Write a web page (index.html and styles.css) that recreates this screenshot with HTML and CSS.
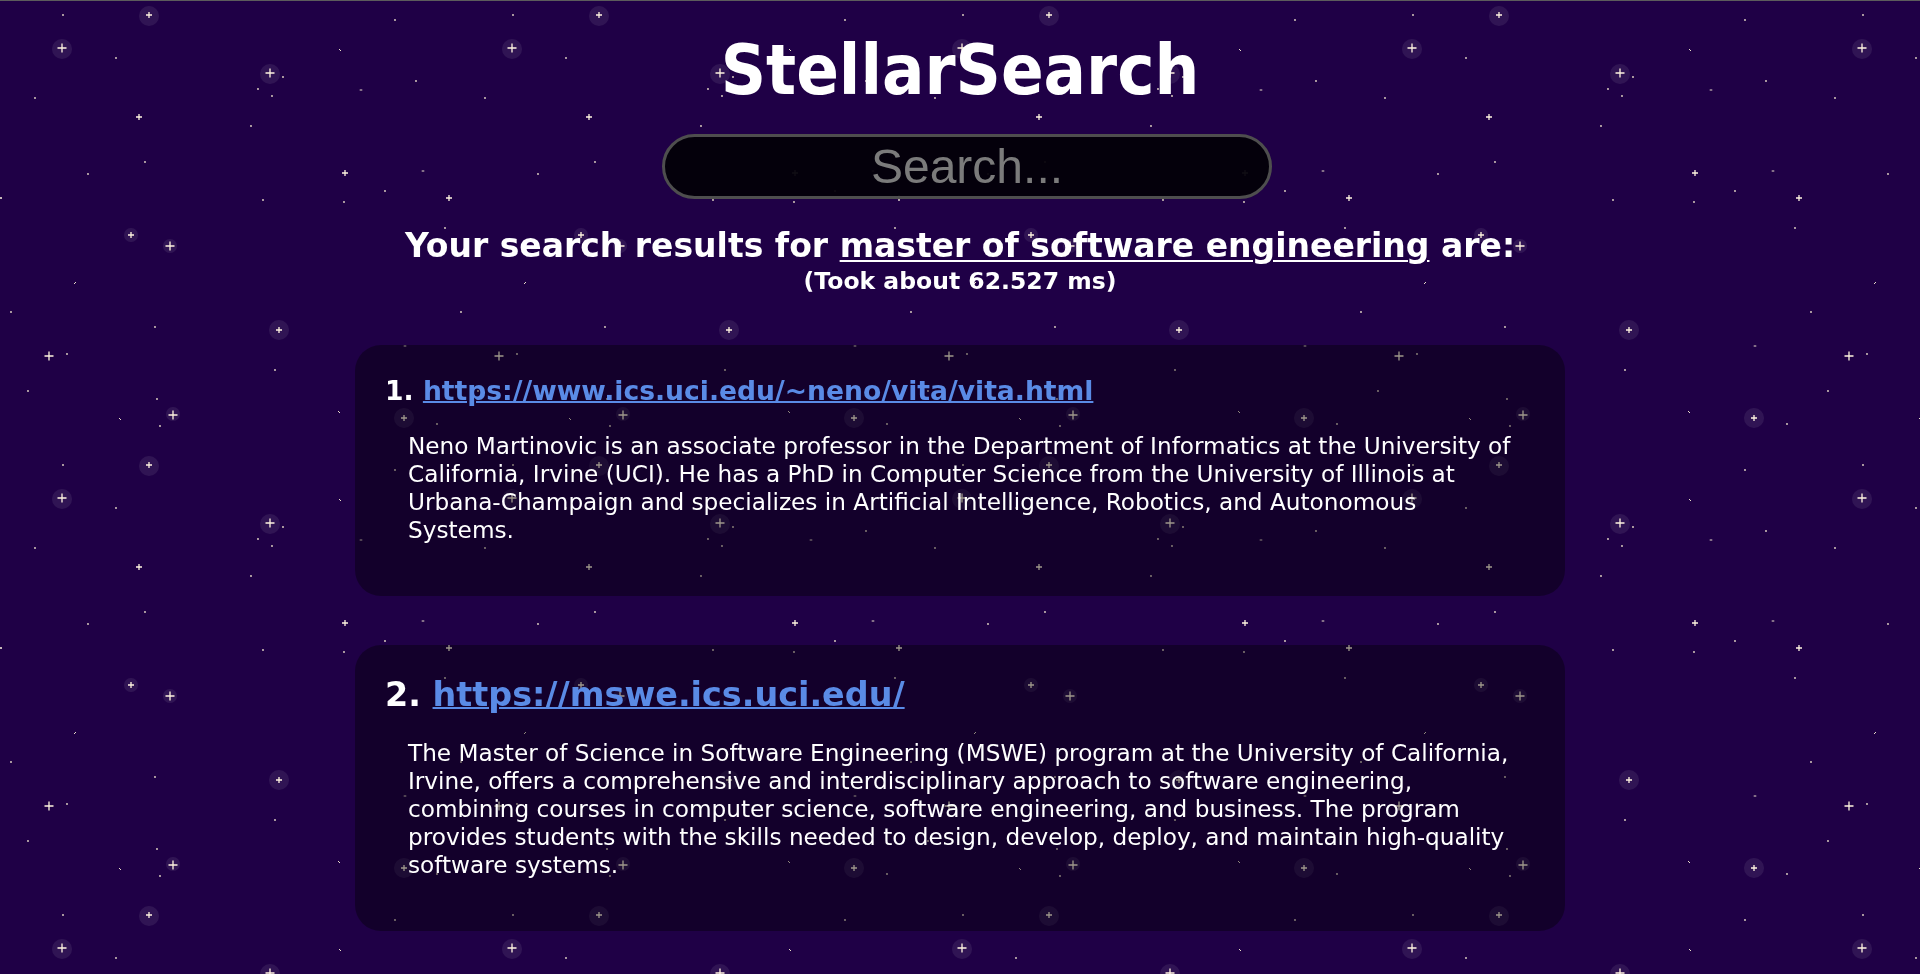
FILE: index.html
```html
<!DOCTYPE html>
<html lang="en">
<head>
<meta charset="utf-8">
<title>StellarSearch</title>
<link rel="stylesheet" href="styles.css">
</head>
<body>
<svg class="sky" aria-hidden="true">
  <defs>
    <g id="halo"><circle r="10" fill="#ffffff" opacity="0.08"/></g>
    <g id="haloS"><circle r="7" fill="#ffffff" opacity="0.08"/></g>
    <g id="big"><path d="M-4.5 0H4.5M0 -4.5V4.5" stroke="#fff4df" stroke-width="1.3"/></g>
    <g id="med"><path d="M-3 0H3M0 -3V3" stroke="#fff4df" stroke-width="1.3"/></g>
    <g id="dot"><circle r="0.9" fill="#e9ddc8"/></g>
    <g id="dashH"><path d="M-1.3 0H1.3" stroke="#e9ddc8" stroke-width="1"/></g>
    <g id="dashD"><path d="M-1 -1L1 1" stroke="#e9ddc8" stroke-width="1"/></g>
    <g id="dashA"><path d="M-1 1L1 -1" stroke="#e9ddc8" stroke-width="1"/></g>
    <pattern id="stars" width="450" height="450" patternUnits="userSpaceOnUse">
      <use href="#dot" x="63" y="15"/>
      <use href="#halo" x="149" y="16"/><use href="#med" x="149" y="15"/>
      <use href="#halo" x="62" y="49"/><use href="#big" x="62" y="48"/>
      <use href="#dot" x="116" y="58"/>
      <use href="#dot" x="35" y="98"/>
      <use href="#med" x="139" y="117"/>
      <use href="#halo" x="270" y="74"/><use href="#big" x="270" y="73"/>
      <use href="#dot" x="283" y="77"/>
      <use href="#dot" x="258" y="89"/>
      <use href="#dot" x="272" y="96"/>
      <use href="#dot" x="251" y="126"/>
      <use href="#dashD" x="340" y="50"/>
      <use href="#dot" x="395" y="20"/>
      <use href="#dashH" x="361" y="90"/>
      <use href="#dot" x="416" y="81"/>
      <use href="#dot" x="145" y="162"/>
      <use href="#dot" x="88" y="174"/>
      <use href="#dot" x="263" y="200"/>
      <use href="#med" x="345" y="173"/>
      <use href="#dot" x="344" y="202"/>
      <use href="#dot" x="385" y="191"/>
      <use href="#dashH" x="423" y="171"/>
      <use href="#med" x="449" y="198"/><use href="#med" x="-1" y="198"/>
      <use href="#dot" x="445" y="228"/>
      <use href="#haloS" x="131" y="235"/><use href="#med" x="131" y="235"/>
      <use href="#haloS" x="170" y="246"/><use href="#big" x="170" y="246"/>
      <use href="#dashA" x="75" y="283"/>
      <use href="#dot" x="11" y="312"/>
      <use href="#dot" x="155" y="327"/>
      <use href="#halo" x="279" y="330"/><use href="#med" x="279" y="330"/>
      <use href="#big" x="49" y="356"/>
      <use href="#dot" x="67" y="354"/>
      <use href="#dot" x="275" y="370"/>
      <use href="#dot" x="28" y="391"/>
      <use href="#dot" x="157" y="399"/>
      <use href="#dashD" x="120" y="419"/>
      <use href="#haloS" x="173" y="414"/><use href="#big" x="173" y="415"/>
      <use href="#dot" x="160" y="426"/>
      <use href="#dashD" x="339" y="412"/>
      <use href="#dashH" x="405" y="346"/>
      <use href="#halo" x="404" y="418"/><use href="#med" x="404" y="418"/>
      <use href="#dot" x="437" y="424"/>
    </pattern>
  </defs>
  <rect width="100%" height="100%" fill="url(#stars)"/>
</svg>

<main class="page">
  <h1 class="brand">StellarSearch</h1>

  <form class="search-form">
    <input class="search-input" type="text" placeholder="Search...">
  </form>

  <h2 class="summary">Your search results for <u>master of software engineering</u> are:</h2>
  <p class="took">(Took about 62.527 ms)</p>

  <section class="results">
    <article class="card">
      <h3 class="card-title size-md">1. <a href="https://www.ics.uci.edu/~neno/vita/vita.html">https://www.ics.uci.edu/~neno/vita/vita.html</a></h3>
      <p class="card-text">Neno Martinovic is an associate professor in the Department of Informatics at the University of California, Irvine (UCI). He has a PhD in Computer Science from the University of Illinois at Urbana-Champaign and specializes in Artificial Intelligence, Robotics, and Autonomous Systems.</p>
    </article>

    <article class="card">
      <h3 class="card-title size-lg">2. <a href="https://mswe.ics.uci.edu/">https://mswe.ics.uci.edu/</a></h3>
      <p class="card-text">The Master of Science in Software Engineering (MSWE) program at the University of California, Irvine, offers a comprehensive and interdisciplinary approach to software engineering, combining courses in computer science, software engineering, and business. The program provides students with the skills needed to design, develop, deploy, and maintain high-quality software systems.</p>
    </article>
  </section>
</main>
</body>
</html>
```

FILE: styles.css
```css
html, body {
  margin: 0;
  padding: 0;
}

body {
  background: #1f0046;
  color: #ffffff;
  font-family: "DejaVu Sans", Verdana, sans-serif;
  border-top: 1px solid #5c5c5c;
  min-height: 973px;
}

.sky {
  position: fixed;
  top: 0;
  left: 0;
  width: 100%;
  height: 100%;
  z-index: -1;
}

.page {
  padding-top: 28px;
  display: flex;
  flex-direction: column;
  align-items: center;
}

.brand {
  margin: 0;
  font-family: "DejaVu Sans Condensed", "DejaVu Sans", sans-serif;
  font-stretch: condensed;
  font-weight: bold;
  font-size: 70px;
  line-height: 82px;
  text-align: center;
}

.search-form {
  margin-top: 23px;
  display: flex;
  justify-content: center;
  padding-left: 14px;
}

.search-input {
  box-sizing: border-box;
  width: 610px;
  height: 65px;
  border: 3px solid #4e4e4e;
  border-radius: 33px;
  background: rgba(3, 0, 8, 0.95);
  color: #ffffff;
  font-family: "Liberation Sans", Arial, sans-serif;
  font-size: 48px;
  text-align: center;
  padding: 0 20px;
  outline: none;
}

.search-input::placeholder {
  color: #7b7b7b;
}

.summary {
  margin: 28px 0 0;
  font-size: 33px;
  line-height: 38px;
  font-weight: bold;
  text-align: center;
}

.summary u {
  text-decoration-thickness: 2px;
  text-underline-offset: 3px;
}

.took {
  margin: 3px 0 0;
  font-size: 23.5px;
  line-height: 27px;
  font-weight: bold;
  text-align: center;
}

.results {
  margin-top: 50px;
  width: 1210px;
  display: flex;
  flex-direction: column;
  gap: 49px;
  padding-bottom: 40px;
}

.card {
  background: rgba(0, 0, 0, 0.38);
  border-radius: 26px;
  padding: 30px 46px 52px 30px;
}

.card-title {
  margin: 0;
  font-weight: bold;
}

.card-title.size-md {
  font-size: 26.6px;
  line-height: 31px;
  margin-bottom: 26px;
}

.card-title.size-lg {
  font-size: 33.4px;
  line-height: 40px;
  margin-bottom: 24px;
}

.card-title a {
  color: #5a8be6;
  text-decoration: underline;
  text-decoration-thickness: 2px;
}

.card-text {
  margin: 0 0 0 23px;
  font-size: 23.2px;
  line-height: 28px;
}
```
